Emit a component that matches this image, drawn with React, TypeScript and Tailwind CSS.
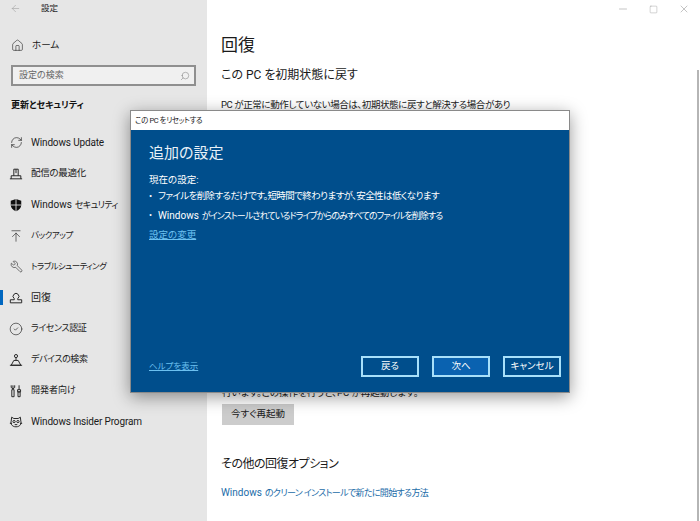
import { ArrowLeft, ArrowUpToLine, CircleCheck, House, Minus, RefreshCw, Search, Square, Wrench, X } from "lucide-react"
import type { ReactNode } from "react"

const font = "font-['Roboto','Noto_Sans_CJK_JP',sans-serif] [font-feature-settings:'palt']"

function Svg({ children }: { children: ReactNode }) {
  return (
    <svg width="14" height="14" viewBox="0 0 16 16" fill="none" stroke="#222" strokeWidth="1.1">
      {children}
    </svg>
  )
}

// keeps the latin word at full width next to squeezed kana
function Latin({ children }: { children: ReactNode }) {
  return <span className="mr-[3px] text-[10px] tracking-normal">{children}</span>
}

const icons = {
  update: <RefreshCw size={13} strokeWidth={1.2} color="#222" />,
  delivery: (
    <Svg>
      <path d="M1 13.500h14M2.500 13.500v-3.500h11v3.500M5.500 10v-7.500h5V10M8 2.500V7" />
    </Svg>
  ),
  shield: (
    <svg width="14" height="14" viewBox="0 0 16 16">
      <path d="M8 1 14 3v5c0 3.5-2.500 5.800-6 7-3.500-1.200-6-3.500-6-7V3z" fill="#111" />
      <path d="M8 1v14M2 8h12" stroke="#e6e6e6" strokeWidth="1" />
    </svg>
  ),
  backup: <ArrowUpToLine size={14} strokeWidth={1.1} color="#222" />,
  wrench: <Wrench size={13} strokeWidth={1.1} color="#222" className="-scale-x-100" />,
  recovery: (
    <Svg>
      <path d="M1.500 13.500h13v-3.500h-4.500v-1.300a3.300 3.300 0 1 0-4 0V10H1.500z" />
    </Svg>
  ),
  license: <CircleCheck size={14} strokeWidth={1.1} color="#222" />,
  find: (
    <Svg>
      <circle cx="8" cy="3.500" r="1.800" />
      <path d="M8 5.500v3M5.500 8.500h5l3 5.500h-11zM1 14h14" />
    </Svg>
  ),
  dev: (
    <Svg>
      <path d="M4.500 1.500v4M2.500 1.500v2.500l2 1.500 2-1.500v-2.500M3.200 6.500h2.600v8h-2.600zM11.500 1.500v5M9.800 6.500h3.400v2.500h-3.400zM10.300 9h2.400v5.500h-2.400z" />
    </Svg>
  ),
  insider: (
    <Svg>
      <path d="M3 2.500 5.500 4h5L13 2.500 13.500 7c1 2.500-.5 6.500-5.500 6.500S1.500 9.500 2.500 7z" />
      <circle cx="5.800" cy="7.500" r="1.300" />
      <circle cx="10.200" cy="7.500" r="1.300" />
      <path d="M1 9.500h2.500M12.500 9.500H15M6.500 11h3" />
    </Svg>
  ),
}

const navItems: { icon: ReactNode; label: ReactNode; cls: string; active?: boolean }[] = [
  { icon: icons.update, label: "Windows Update", cls: "text-[10px] tracking-[-0.15px]" },
  { icon: icons.delivery, label: "配信の最適化", cls: "text-[9.500px] tracking-[-0.300px]" },
  {
    icon: icons.shield,
    label: (
      <>
        <Latin>Windows</Latin>セキュリティ
      </>
    ),
    cls: "text-[9px] tracking-[-0.600px]",
  },
  { icon: icons.backup, label: "バックアップ", cls: "text-[8.500px] tracking-[-0.500px]" },
  { icon: icons.wrench, label: "トラブルシューティング", cls: "text-[8.500px] tracking-[-0.600px]" },
  { icon: icons.recovery, label: "回復", active: true, cls: "text-[10px]" },
  { icon: icons.license, label: "ライセンス認証", cls: "text-[9px] tracking-[-0.400px]" },
  { icon: icons.find, label: "デバイスの検索", cls: "text-[9px] tracking-[-0.400px]" },
  { icon: icons.dev, label: "開発者向け", cls: "text-[9px]" },
  { icon: icons.insider, label: "Windows Insider Program", cls: "text-[10px] tracking-[-0.15px]" },
]

function Sidebar() {
  return (
    <aside className="w-[207px] shrink-0 bg-[#e6e6e6] text-[#1a1a1a]">
      <div className="flex h-[17px] items-center pl-[10px] text-[8.500px]">
        <ArrowLeft size={11} strokeWidth={1.2} color="#9a9a9a" />
        <span className="ml-[20px]">設定</span>
      </div>
      <div className="mt-[18px] flex h-5 items-center pl-[11px] text-[9.500px]">
        <House size={13} strokeWidth={1.1} color="#222" />
        <span className="ml-[8px]">ホーム</span>
      </div>
      <div className="mx-[11px] mt-[10px] flex h-[21px] items-center justify-between border-2 border-[#8f8f8f] bg-[#f0f0f0] pl-[6px] pr-[4px] text-[9px] text-[#666]">
        <span>設定の検索</span>
        <Search size={10} strokeWidth={1.2} color="#777" className="-scale-x-100" />
      </div>
      <h2 className="mt-[12px] h-[15px] pl-[11px] text-[9px] leading-[15px] font-bold text-[#111]">更新とセキュリティ</h2>
      <nav className="mt-[14px]">
        {navItems.map((item, index) => (
          <div key={index} className={`relative flex h-[31px] items-center pl-[9px] ${item.cls}`}>
            {item.active && <span className="absolute top-[8px] left-0 h-[15px] w-[3px] bg-[#0067c0]" />}
            <span className="flex w-[14px] justify-center">{item.icon}</span>
            <span className="ml-[8px] whitespace-nowrap">{item.label}</span>
          </div>
        ))}
      </nav>
    </aside>
  )
}

function Content() {
  return (
    <main className="relative min-w-0 flex-1 bg-white pl-[14px] text-[#1a1a1a]">
      <div className="absolute top-[3px] right-[10px] flex items-center gap-[20px]">
        <Minus size={12} strokeWidth={1} color="#888" />
        <Square size={9} strokeWidth={1} color="#888" />
        <X size={12} strokeWidth={1} color="#888" />
      </div>
      <div className="absolute top-[70px] right-[1px] h-[451px] w-[2px] bg-[#b5b5b5]" />
      <h1 className="pt-[32px] text-[17px] leading-[26px]">回復</h1>
      <h2 className="mt-[7px] text-[12px] leading-[20px]">この PC を初期状態に戻す</h2>
      <p className="mt-[12px] text-[9.500px] leading-[15px] tracking-[-0.400px]">PC が正常に動作していない場合は、初期状態に戻すと解決する場合があり</p>
      <p className="mt-[273px] pl-[1px] text-[9.500px] leading-[15px]">行います。この操作を行うと、PC が再起動します。</p>
      <button className="mt-[3px] ml-[1px] h-[21px] w-[72px] bg-[#cccccc] text-[9.500px]">今すぐ再起動</button>
      <h2 className="mt-[29px] text-[12px] leading-[20px] tracking-[-0.500px]">その他の回復オプション</h2>
      <a className="mt-[11px] block text-[9px] leading-[15px] tracking-[-0.650px] text-[#1b6ca8]">
        <Latin>Windows</Latin>のクリーン インストールで新たに開始する方法
      </a>
    </main>
  )
}

function Dialog() {
  return (
    <div className="absolute top-[110px] left-[130px] flex h-[283px] w-[440px] flex-col border border-[#8a8a8a] bg-[#004e8c] shadow-[0_4px_16px_rgba(0,0,0,0.4)]">
      <div className="flex h-[19px] shrink-0 items-center bg-white pl-[4px] text-[7.500px] tracking-[-0.400px] whitespace-pre text-[#222]">この PC をリセットする</div>
      <div className="flex flex-1 flex-col pt-[12px] pr-[8px] pb-[15px] pl-[18px] text-white">
        <h2 className="text-[15px] leading-[22px] text-[#e8f1f8]">追加の設定</h2>
        <p className="mt-[8px] text-[9.500px] leading-[15px]">現在の設定:</p>
        <ul className="text-[9.500px]">
          <li className="flex h-[18px] items-center tracking-[-0.600px]">
            <span className="w-[9px]">•</span>ファイルを削除するだけです。短時間で終わりますが、安全性は低くなります
          </li>
          <li className="mt-[2px] flex h-[18px] items-center text-[9px] tracking-[-0.900px]">
            <span className="w-[9px]">•</span>
            <span>
              <Latin>Windows</Latin>がインストールされているドライブからのみすべてのファイルを削除する
            </span>
          </li>
        </ul>
        <a className="mt-[2px] text-[9.500px] leading-[15px] text-[#6cc0f0] underline">設定の変更</a>
        <div className="mt-auto flex items-center">
          <a className="mr-auto text-[8.500px] text-[#6cc0f0] underline">ヘルプを表示</a>
          <button className="h-[21px] w-[58px] border-2 border-[#a8e0fa] bg-[#004e8c] text-[9.500px]">戻る</button>
          <button className="ml-[13px] h-[21px] w-[58px] border-2 border-[#a8e0fa] bg-[#0a62b0] text-[9.500px]">次へ</button>
          <button className="ml-[13px] h-[21px] w-[58px] border-2 border-[#a8e0fa] bg-[#004e8c] text-[9.500px]">キャンセル</button>
        </div>
      </div>
    </div>
  )
}

export default function App() {
  return (
    <div className={`relative flex h-[521px] w-[700px] overflow-hidden ${font}`}>
      <Sidebar />
      <Content />
      <Dialog />
    </div>
  )
}
